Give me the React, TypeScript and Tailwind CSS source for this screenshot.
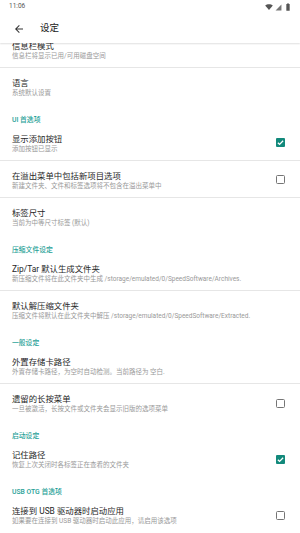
import { ReactNode } from "react";

interface Pref {
  title: string;
  summary: string;
  checked?: boolean;
  divider?: boolean;
}

interface Section {
  header?: string;
  items: Pref[];
}

const sections: Section[] = [
  {
    items: [
      { title: "信息栏模式", summary: "信息栏将显示已用/可用磁盘空间", divider: true },
      { title: "语言", summary: "系统默认设置" },
    ],
  },
  {
    header: "UI 首选项",
    items: [
      { title: "显示添加按钮", summary: "添加按钮已显示", checked: true, divider: true },
      {
        title: "在溢出菜单中包括新项目选项",
        summary: "新建文件夹、文件和标签选项将不包含在溢出菜单中",
        checked: false,
        divider: true,
      },
      { title: "标签尺寸", summary: "当前为中等尺寸标签 (默认)" },
    ],
  },
  {
    header: "压缩文件设定",
    items: [
      {
        title: "Zip/Tar 默认生成文件夹",
        summary: "新压缩文件将在此文件夹中生成 /storage/emulated/0/SpeedSoftware/Archives.",
        divider: true,
      },
      {
        title: "默认解压缩文件夹",
        summary: "压缩文件将默认在此文件夹中解压 /storage/emulated/0/SpeedSoftware/Extracted.",
      },
    ],
  },
  {
    header: "一般设定",
    items: [
      {
        title: "外置存储卡路径",
        summary: "外置存储卡路径，为空时自动检测。当前路径为 空白.",
        divider: true,
      },
      {
        title: "遗留的长按菜单",
        summary: "一旦被激活，长按文件或文件夹会显示旧版的选项菜单",
        checked: false,
      },
    ],
  },
  {
    header: "启动设定",
    items: [{ title: "记住路径", summary: "恢复上次关闭时各标签正在查看的文件夹", checked: true }],
  },
  {
    header: "USB OTG 首选项",
    items: [
      {
        title: "连接到 USB 驱动器时启动应用",
        summary: "如果要在连接到 USB 驱动器时启动此应用，请启用该选项",
        checked: false,
      },
    ],
  },
];

function Checkbox({ checked }: { checked: boolean }) {
  if (checked) {
    return (
      <div className="size-[9px] rounded-[1px] bg-[#12897b] flex items-center justify-center">
        <svg viewBox="0 0 24 24" className="size-[9px]" fill="none" stroke="white" strokeWidth={3.4}>
          <path d="M5 12.5l4.5 4.5L19 7.5" />
        </svg>
      </div>
    );
  }
  return <div className="size-[9px] rounded-[1.5px] border-[1.5px] border-[#757575]" />;
}

function PrefRow({ pref }: { pref: Pref }) {
  return (
    <div className={`h-[37px] flex ${pref.divider ? "border-b border-[#e6e6e6]" : ""}`}>
      <div className="flex-1 min-w-0 pl-[12px] pt-[10px]">
        <div className="text-[8.4px] leading-[10px] text-[#262626] whitespace-nowrap">{pref.title}</div>
        <div className="text-[6.5px] leading-[10px] text-[#999] whitespace-nowrap">{pref.summary}</div>
      </div>
      {pref.checked !== undefined && (
        <div className="w-[40px] flex items-center justify-center pl-[1px] pt-[1px]">
          <Checkbox checked={pref.checked} />
        </div>
      )}
    </div>
  );
}

function Header({ children }: { children: ReactNode }) {
  return (
    <div className="h-[19px] pl-[12px] pt-[11px] text-[6.8px] leading-[8px] font-medium text-[#26a096]">
      {children}
    </div>
  );
}

function StatusBar() {
  return (
    <div className="h-[14px] flex items-center justify-between pl-[9px] pr-[10px] text-[6.5px] text-[#555]">
      <span>11:06</span>
      <div className="flex items-center gap-[2px]">
        <svg viewBox="0 0 24 24" className="size-[8px]" fill="#555">
          <path d="M12 21L0.5 7.5C3.5 5 7.5 3.5 12 3.5s8.5 1.5 11.5 4L12 21z" />
        </svg>
        <svg viewBox="0 0 24 24" className="size-[7px]" fill="#777">
          <path d="M22 2v20H2z" />
        </svg>
        <svg viewBox="0 0 12 24" className="w-[4px] h-[8px] ml-[2px]" fill="#555">
          <path d="M4 1h4v2h3v20H1V3h3z" />
        </svg>
      </div>
    </div>
  );
}

export default function App() {
  return (
    <div
      className="w-[300px] h-[533px] bg-white overflow-hidden flex flex-col"
      style={{ fontFamily: '"Roboto", "Noto Sans CJK SC", sans-serif' }}
    >
      <div className="relative z-10 bg-white shadow-[0_1px_1.5px_rgba(0,0,0,0.12)]">
        <StatusBar />
        <div className="h-[29px] flex items-center">
          <svg viewBox="0 0 24 24" className="size-[12px] ml-[13px]" fill="#333">
            <path d="M20 11H7.83l5.59-5.59L12 4l-8 8 8 8 1.41-1.41L7.83 13H20v-2z" />
          </svg>
          <span className="ml-[15px] text-[9.5px] text-[#222]">设定</span>
        </div>
      </div>
      <div className="flex-1 overflow-hidden">
        <div className="-mt-[12px]">
          {sections.map((s, i) => (
            <div key={i}>
              {s.header && <Header>{s.header}</Header>}
              {s.items.map((p) => (
                <PrefRow key={p.title} pref={p} />
              ))}
            </div>
          ))}
        </div>
      </div>
    </div>
  );
}
